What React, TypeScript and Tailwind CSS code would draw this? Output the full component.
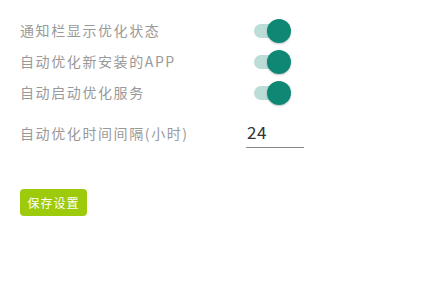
import { useState } from "react";

type ToggleRow = { label: string; on: boolean };

const rows: ToggleRow[] = [
    { label: "通知栏显示优化状态", on: true },
    { label: "自动优化新安装的APP", on: true },
    { label: "自动启动优化服务", on: true },
];

function Toggle({ on, onClick }: { on: boolean; onClick: () => void }) {
    return (
        <button
            className="relative w-[37px] h-[24px] shrink-0"
            onClick={onClick}
        >
            <span
                className={`absolute left-0 top-[5px] h-[14px] w-[32px] rounded-full ${
                    on ? "bg-[#bcdcd7]" : "bg-[#d0d0d0]"
                }`}
            />
            <span
                className={`absolute top-0 h-[24px] w-[24px] rounded-full shadow-[0_1px_2px_rgba(0,0,0,0.25)] ${
                    on ? "right-0 bg-[#0e8875]" : "left-0 bg-[#f1f1f1]"
                }`}
            />
        </button>
    );
}

export default function App() {
    const [state, setState] = useState(rows.map((r) => r.on));
    const [hours, setHours] = useState("24");

    return (
        <div
            className="w-[439px] h-[282px] bg-white pl-[20px] pt-[15px]"
            style={{ fontFamily: '"Noto Sans CJK SC", "Noto Sans", sans-serif' }}
        >
            {rows.map((row, i) => (
                <div key={i} className="flex items-center h-[31px]">
                    <span className="w-[234px] text-[14px] tracking-[1.6px] text-[#999]">
                        {row.label}
                    </span>
                    <Toggle
                        on={state[i]}
                        onClick={() =>
                            setState(state.map((v, j) => (j === i ? !v : v)))
                        }
                    />
                </div>
            ))}
            <div className="flex items-center mt-[10px] h-[30px]">
                <span className="w-[226px] text-[14px] tracking-[1.6px] text-[#999]">
                    自动优化时间间隔(小时)
                </span>
                <input
                    value={hours}
                    onChange={(e) => setHours(e.target.value)}
                    className="w-[58px] h-[30px] pl-[1px] pb-[3px] text-[17px] tracking-[0.5px] text-[#333] border-b border-[#888] outline-none"
                />
            </div>
            <button className="mt-[41px] w-[67px] h-[27px] rounded-[4px] bg-[#9dcb0b] text-white text-[12px] tracking-[1px]">
                保存设置
            </button>
        </div>
    );
}
